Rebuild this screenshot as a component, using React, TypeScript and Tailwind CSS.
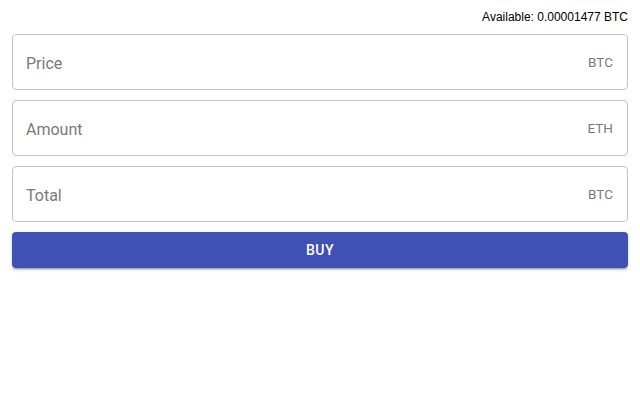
import React from 'react';

const FIELDS = [
  { label: 'Price', unit: 'BTC' },
  { label: 'Amount', unit: 'ETH' },
  { label: 'Total', unit: 'BTC' },
];

export default function App() {
  return (
    <div className="w-[640px] h-[400px] bg-white px-3">
      <div className="pt-[10px] text-right text-xs leading-[14px] text-black font-['Liberation_Sans',Arial,sans-serif]">
        Available: 0.00001477 BTC
      </div>
      <div className="flex flex-col gap-[10px] mt-[10px] font-['Roboto',sans-serif]">
        {FIELDS.map((f) => (
          <div
            key={f.label}
            className="h-[56px] flex items-center justify-between pl-[14px] pr-[14px] border border-[#c4c4c4] rounded"
          >
            <span className="text-base leading-6 text-[#7a7a7a] translate-y-[2px] -translate-x-px">{f.label}</span>
            <span className="text-[13.5px] leading-5 text-[#7a7a7a]">{f.unit}</span>
          </div>
        ))}
        <button className="h-[36px] w-full rounded bg-[#3f51b5] text-white text-sm font-medium uppercase tracking-[0.4px] shadow-[0_3px_1px_-2px_rgba(0,0,0,0.2),0_2px_2px_0_rgba(0,0,0,0.14),0_1px_5px_0_rgba(0,0,0,0.12)]">
          Buy
        </button>
      </div>
    </div>
  );
}
